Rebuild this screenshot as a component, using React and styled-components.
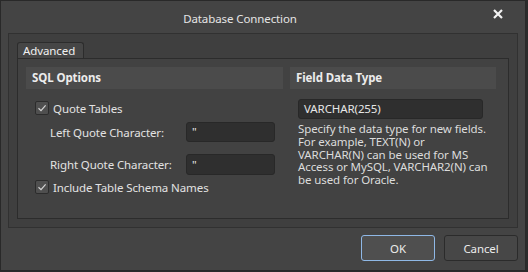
import React from 'react'
import styled, { createGlobalStyle } from 'styled-components'

const GlobalStyle = createGlobalStyle`
  html, body {
    margin: 0;
    padding: 0;
    background: #2b2b2b;
  }
  body {
    font-family: "Noto Sans", "Open Sans", sans-serif;
    font-size: 11.5px;
    letter-spacing: -0.1px;
    color: #e2e2e2;
  }
`

const Window = styled.div`
  width: 526px;
  height: 271px;
  box-sizing: border-box;
  border: 1px solid #292929;
  background: #444444;
  display: flex;
  flex-direction: column;
`

const TitleBar = styled.div`
  height: 32px;
  display: flex;
  align-items: center;
  padding-right: 8px;
`

const Title = styled.div`
  flex: 1;
  text-align: center;
  font-size: 11.5px;
  color: #e4e4e4;
  padding-top: 2px;
`

const CloseButton = styled.div`
  width: 38px;
  height: 24px;
  display: flex;
  align-items: center;
  justify-content: center;
  margin-top: -6px;
`

const Body = styled.div`
  padding: 0 7px;
  display: flex;
  flex-direction: column;
`

const Frame = styled.div`
  border: 1px solid #313131;
  background: #3f3f3f;
  padding: 8px;
  height: 195px;
  box-sizing: border-box;
  display: flex;
  flex-direction: column;
`

const TabStrip = styled.div`
  display: flex;
  height: 16px;
`

const Tab = styled.div`
  height: 16px;
  width: 67px;
  box-sizing: border-box;
  padding-left: 5px;
  border: 1px solid #2c2c2c;
  border-bottom: none;
  border-radius: 3px 3px 0 0;
  background: #464646;
  color: #f0f0f0;
  line-height: 16px;
  margin-bottom: -1px;
  position: relative;
  z-index: 1;
`

const Panel = styled.div`
  flex: 1;
  border: 1px solid #2c2c2c;
  background: #424242;
  padding: 8px;
  display: grid;
  grid-template-columns: 257px 206px;
  column-gap: 7px;
  align-items: start;
`

const Column = styled.div`
  display: flex;
  flex-direction: column;
`

const SectionHeader = styled.div`
  height: 22px;
  background: #4b4b4b;
  font-weight: bold;
  line-height: 22px;
  padding-left: 6px;
  color: #ececec;
`

const CheckRow = styled.label`
  display: flex;
  align-items: center;
  gap: 4px;
  height: 16px;
  margin-left: 9px;
  margin-top: ${p => p.$top}px;
`

const Box = styled.span`
  width: 14px;
  height: 14px;
  box-sizing: border-box;
  border: 1px solid #2c2c2c;
  border-radius: 2px;
  background: #4f4f4f;
  display: flex;
  align-items: center;
  justify-content: center;
`

const FieldRow = styled.div`
  display: flex;
  align-items: center;
  margin-top: ${p => p.$top}px;
  padding-left: 24px;
`

const FieldLabel = styled.span`
  width: 136px;
`

const Input = styled.div`
  width: ${p => p.$w}px;
  height: ${p => p.$h}px;
  box-sizing: border-box;
  border: 1px solid #282828;
  border-radius: 3px;
  background: #2f2f2f;
  color: #e6e6e6;
  line-height: ${p => p.$h - 2}px;
  padding-left: 5px;
  margin-left: ${p => p.$left || 0}px;
  margin-top: ${p => p.$top || 0}px;
`

const Description = styled.p`
  margin: 4px 0 0 8px;
  width: 195px;
  line-height: 12.8px;
  color: #dcdcdc;
`

const ButtonRow = styled.div`
  display: flex;
  justify-content: flex-end;
  gap: 9px;
  margin-top: 7px;
`

const Button = styled.button`
  width: 74px;
  height: 26px;
  border-radius: 3px;
  border: 1px solid ${p => (p.$primary ? '#8fb8e6' : '#2b2b2b')};
  background: ${p => (p.$primary ? '#4f4f4f' : '#474747')};
  color: #ececec;
  font-family: inherit;
  font-size: 11.5px;
  letter-spacing: inherit;
  padding: 0;
`

const Check = () => (
  <svg width="10" height="10" viewBox="0 0 10 10">
    <path d="M1.5 5.2 L4 7.6 L8.6 2.4" fill="none" stroke="#d4d4d4" strokeWidth="1.2" />
  </svg>
)

export default function App() {
  return (
    <>
      <GlobalStyle />
      <Window>
        <TitleBar>
          <Title>Database Connection</Title>
          <CloseButton>
            <svg width="10" height="10" viewBox="0 0 10 10">
              <path d="M1 1 L9 9 M9 1 L1 9" stroke="#f4f4f4" strokeWidth="2.2" />
            </svg>
          </CloseButton>
        </TitleBar>
        <Body>
          <Frame>
            <TabStrip>
              <Tab>Advanced</Tab>
            </TabStrip>
            <Panel>
              <Column>
                <SectionHeader>SQL Options</SectionHeader>
                <CheckRow $top={11}>
                  <Box><Check /></Box>
                  Quote Tables
                </CheckRow>
                <FieldRow $top={6}>
                  <FieldLabel>Left Quote Character:</FieldLabel>
                  <Input $w={89} $h={20}>"</Input>
                </FieldRow>
                <FieldRow $top={12}>
                  <FieldLabel>Right Quote Character:</FieldLabel>
                  <Input $w={89} $h={21}>"</Input>
                </FieldRow>
                <CheckRow $top={4}>
                  <Box><Check /></Box>
                  Include Table Schema Names
                </CheckRow>
              </Column>
              <Column>
                <SectionHeader>Field Data Type</SectionHeader>
                <Input $w={185} $h={20} $left={8} $top={10}>VARCHAR(255)</Input>
                <Description>
                  Specify the data type for new fields. For example, TEXT(N) or VARCHAR(N) can be used for MS Access or MySQL, VARCHAR2(N) can be used for Oracle.
                </Description>
              </Column>
            </Panel>
          </Frame>
          <ButtonRow>
            <Button $primary>OK</Button>
            <Button>Cancel</Button>
          </ButtonRow>
        </Body>
      </Window>
    </>
  )
}
